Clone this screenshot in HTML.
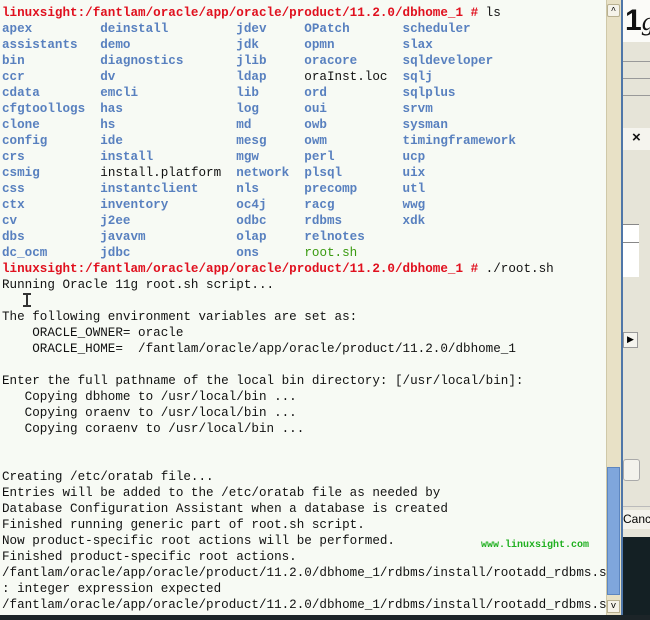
<html><head><style>
body{margin:0;width:650px;height:620px;overflow:hidden;background:#f7faf4;position:relative;font-family:"Liberation Mono",monospace}
pre{position:absolute;left:2px;top:5px;margin:0;font-size:12.6px;line-height:16px;color:#111;font-family:"Liberation Mono",monospace}
.p{color:#e0101e;font-weight:bold}.b{color:#5880bf;font-weight:bold}.g{color:#3a9a10}
</style></head><body>
<pre><span class="p">linuxsight:/fantlam/oracle/app/oracle/product/11.2.0/dbhome_1 #</span> ls
<span class="b">apex         deinstall         jdev     OPatch       scheduler</span>
<span class="b">assistants   demo              jdk      opmn         slax</span>
<span class="b">bin          diagnostics       jlib     oracore      sqldeveloper</span>
<span class="b">ccr          dv                ldap</span>     oraInst.loc  <span class="b">sqlj</span>
<span class="b">cdata        emcli             lib      ord          sqlplus</span>
<span class="b">cfgtoollogs  has               log      oui          srvm</span>
<span class="b">clone        hs                md       owb          sysman</span>
<span class="b">config       ide               mesg     owm          timingframework</span>
<span class="b">crs          install           mgw      perl         ucp</span>
<span class="b">csmig</span>        install.platform  <span class="b">network  plsql        uix</span>
<span class="b">css          instantclient     nls      precomp      utl</span>
<span class="b">ctx          inventory         oc4j     racg         wwg</span>
<span class="b">cv           j2ee              odbc     rdbms        xdk</span>
<span class="b">dbs          javavm            olap     relnotes</span>
<span class="b">dc_ocm       jdbc              ons</span>      <span class="g">root.sh</span>
<span class="p">linuxsight:/fantlam/oracle/app/oracle/product/11.2.0/dbhome_1 #</span> ./root.sh
Running Oracle 11g root.sh script...

The following environment variables are set as:
    ORACLE_OWNER= oracle
    ORACLE_HOME=  /fantlam/oracle/app/oracle/product/11.2.0/dbhome_1

Enter the full pathname of the local bin directory: [/usr/local/bin]:
   Copying dbhome to /usr/local/bin ...
   Copying oraenv to /usr/local/bin ...
   Copying coraenv to /usr/local/bin ...


Creating /etc/oratab file...
Entries will be added to the /etc/oratab file as needed by
Database Configuration Assistant when a database is created
Finished running generic part of root.sh script.
Now product-specific root actions will be performed.
Finished product-specific root actions.
/fantlam/oracle/app/oracle/product/11.2.0/dbhome_1/rdbms/install/rootadd_rdbms.s
: integer expression expected
/fantlam/oracle/app/oracle/product/11.2.0/dbhome_1/rdbms/install/rootadd_rdbms.s</pre>
<div style="position:absolute;left:26px;top:293px;width:2px;height:13px;background:#333"></div>
<div style="position:absolute;left:23px;top:293px;width:8px;height:2px;background:#333"></div>
<div style="position:absolute;left:23px;top:305px;width:8px;height:2px;background:#333"></div>
<div style="position:absolute;left:481px;top:540px;font:bold 10px 'Liberation Mono',monospace;color:#20b020">www.linuxsight.com</div>
<div style="position:absolute;left:606px;top:0;width:15px;height:615px;background:#e8e1c6;border-left:1px solid #cfc8a8"></div>
<div style="position:absolute;left:607px;top:4px;width:13px;height:13px;background:#f5f3ea;border:1px solid #b8b090;border-radius:2px;font-size:9px;text-align:center;line-height:13px;box-sizing:border-box">^</div>
<div style="position:absolute;left:607px;top:467px;width:13px;height:128px;background:#7fa6dc;border:1px solid #5d86c0;box-sizing:border-box"></div>
<div style="position:absolute;left:607px;top:600px;width:13px;height:13px;background:#f5f3ea;border:1px solid #b8b090;box-sizing:border-box;font-size:9px;text-align:center;line-height:11px">v</div>
<div style="position:absolute;left:621px;top:0;width:2px;height:615px;background:#4f76a8"></div>
<div style="position:absolute;left:623px;top:0;width:27px;height:537px;background:#e6e4d8"></div>
<div style="position:absolute;left:623px;top:0;width:27px;height:42px;background:#fbfbf8"></div>
<div style="position:absolute;left:625px;top:4px;font:bold 30px 'Liberation Sans',sans-serif;color:#111;line-height:34px">1<span style="font:italic 26px 'Liberation Serif',serif">g</span></div>
<div style="position:absolute;left:623px;top:61px;width:27px;height:1px;background:#999"></div>
<div style="position:absolute;left:623px;top:78px;width:27px;height:1px;background:#999"></div>
<div style="position:absolute;left:623px;top:95px;width:27px;height:1px;background:#999"></div>
<div style="position:absolute;left:623px;top:128px;width:27px;height:22px;background:#f5f4ee"></div>
<div style="position:absolute;left:632px;top:129px;font:bold 15px 'Liberation Sans',sans-serif;color:#111">×</div>
<div style="position:absolute;left:623px;top:224px;width:16px;height:52px;background:#fff;border-top:1px solid #888"></div>
<div style="position:absolute;left:623px;top:242px;width:16px;height:1px;background:#888"></div>
<div style="position:absolute;left:623px;top:332px;width:15px;height:16px;background:#f5f4ee;border:1px solid #999;box-sizing:border-box;font-size:9px;line-height:14px;text-align:center">▶</div>
<div style="position:absolute;left:623px;top:459px;width:17px;height:22px;background:#f3f2ec;border:1px solid #aaa;border-radius:3px;box-sizing:border-box"></div>
<div style="position:absolute;left:623px;top:506px;width:27px;height:1px;background:#bbb"></div>
<div style="position:absolute;left:623px;top:510px;width:27px;height:19px;background:#f3f2ec;font:12px 'Liberation Sans',sans-serif;line-height:19px">Cance</div>
<div style="position:absolute;left:623px;top:537px;width:27px;height:83px;background:#142024"></div>
<div style="position:absolute;left:0;top:615px;width:650px;height:5px;background:#1c2428"></div>
</body></html>
